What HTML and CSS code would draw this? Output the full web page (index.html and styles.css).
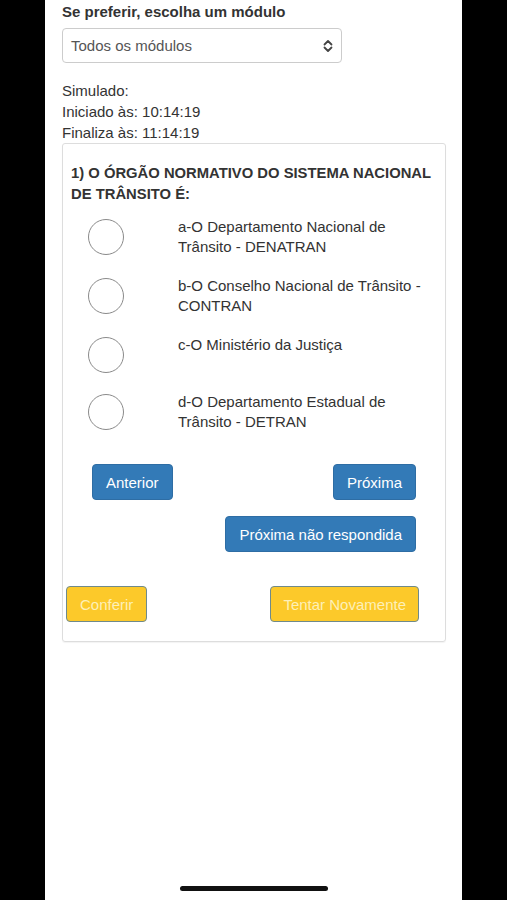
FILE: index.html
```html
<!DOCTYPE html>
<html lang="pt-BR">
<head>
<meta charset="utf-8">
<title>Simulado</title>
<link rel="stylesheet" href="styles.css">
</head>
<body>
<div class="screen">
  <div class="content">
    <label class="field-label">Se preferir, escolha um módulo</label>
    <div class="select">
      <span>Todos os módulos</span>
      <svg class="chev" width="10" height="14" viewBox="0 0 10 14"><path d="M1.5 5.5 L5 2 L8.5 5.5 M1.5 8.5 L5 12 L8.5 8.5" fill="none" stroke="#444" stroke-width="1.8" stroke-linecap="round" stroke-linejoin="round"/></svg>
    </div>
    <div class="info">
      <div>Simulado:</div>
      <div>Iniciado às: 10:14:19</div>
      <div>Finaliza às: 11:14:19</div>
    </div>
    <div class="card">
      <h2 class="question">1) O ÓRGÃO NORMATIVO DO SISTEMA NACIONAL DE TRÂNSITO É:</h2>
      <div class="options">
        <div class="option"><span class="radio"></span><span class="opt-text">a-O Departamento Nacional de Trânsito - DENATRAN</span></div>
        <div class="option"><span class="radio"></span><span class="opt-text">b-O Conselho Nacional de Trânsito - CONTRAN</span></div>
        <div class="option"><span class="radio"></span><span class="opt-text">c-O Ministério da Justiça</span></div>
        <div class="option"><span class="radio"></span><span class="opt-text">d-O Departamento Estadual de Trânsito - DETRAN</span></div>
      </div>
      <div class="nav-row">
        <button class="btn btn-blue">Anterior</button>
        <button class="btn btn-blue">Próxima</button>
      </div>
      <div class="nav-row right">
        <button class="btn btn-blue">Próxima não respondida</button>
      </div>
      <div class="action-row">
        <button class="btn btn-yellow">Conferir</button>
        <button class="btn btn-yellow tight">Tentar Novamente</button>
      </div>
    </div>
  </div>
  <div class="home-bar"></div>
</div>
</body>
</html>
```
FILE: styles.css
```css
html, body {
  margin: 0;
  padding: 0;
  background: #000;
}
body {
  font-family: "Liberation Sans", Arial, Helvetica, sans-serif;
  color: #333;
  font-size: 15px;
}
.screen {
  width: 417px;
  height: 900px;
  margin-left: 45px;
  background: #fff;
  display: flex;
  flex-direction: column;
  box-sizing: border-box;
}
.content {
  flex: 1;
  padding: 2px 16px 0 17px;
}
.field-label {
  display: block;
  font-weight: bold;
  font-size: 15px;
  line-height: 20px;
  color: #333;
}
.select {
  margin-top: 6px;
  width: 280px;
  height: 35px;
  box-sizing: border-box;
  border: 1px solid #ccc;
  border-radius: 4px;
  display: flex;
  align-items: center;
  justify-content: space-between;
  padding: 0 8px 0 8px;
  color: #555;
  font-size: 15px;
}
.chev { display: block; }
.info {
  margin-top: 17px;
  font-size: 15px;
  line-height: 21px;
  color: #333;
}
.card {
  margin-top: 0;
  border: 1px solid #ddd;
  border-radius: 3px;
  box-shadow: 0 1px 1px rgba(0,0,0,0.05);
  padding: 19px 0 19px 0;
}
.question {
  margin: 0;
  padding: 0 8px 0 8px;
  font-size: 14.8px;
  line-height: 21px;
  font-weight: bold;
  color: #333;
}
.options {
  margin-top: 12px;
  padding-left: 25px;
}
.option {
  display: flex;
  align-items: flex-start;
  margin-bottom: 19px;
}
.radio {
  flex: none;
  width: 36px;
  height: 36px;
  box-sizing: border-box;
  border: 1.5px solid #8a8a8a;
  border-radius: 50%;
  margin-top: 2px;
}
.opt-text {
  margin-left: 54px;
  width: 250px;
  line-height: 20px;
  font-size: 15px;
  color: #333;
}
.nav-row {
  display: flex;
  justify-content: space-between;
  padding: 0 29px;
  margin-top: 32px;
}
.nav-row.right {
  justify-content: flex-end;
  margin-top: 16px;
}
.btn {
  font-family: inherit;
  font-size: 15px;
  height: 36px;
  border-radius: 4px;
  padding: 0 13px;
  cursor: pointer;
}
.btn-blue {
  background: #337ab7;
  border: 1px solid #2e6da4;
  color: #fff;
}
.action-row {
  display: flex;
  justify-content: space-between;
  padding: 0 26px 0 3px;
  margin-top: 34px;
}
.btn-yellow {
  background: #fcc92a;
  border: 1.5px solid #6f8a8b;
  color: #fdf0b8;
}
.btn-yellow.tight {
  padding: 0 12px;
}
.home-bar {
  align-self: center;
  width: 148px;
  height: 5px;
  border-radius: 3px;
  background: #111;
  margin-bottom: 9px;
}
```
